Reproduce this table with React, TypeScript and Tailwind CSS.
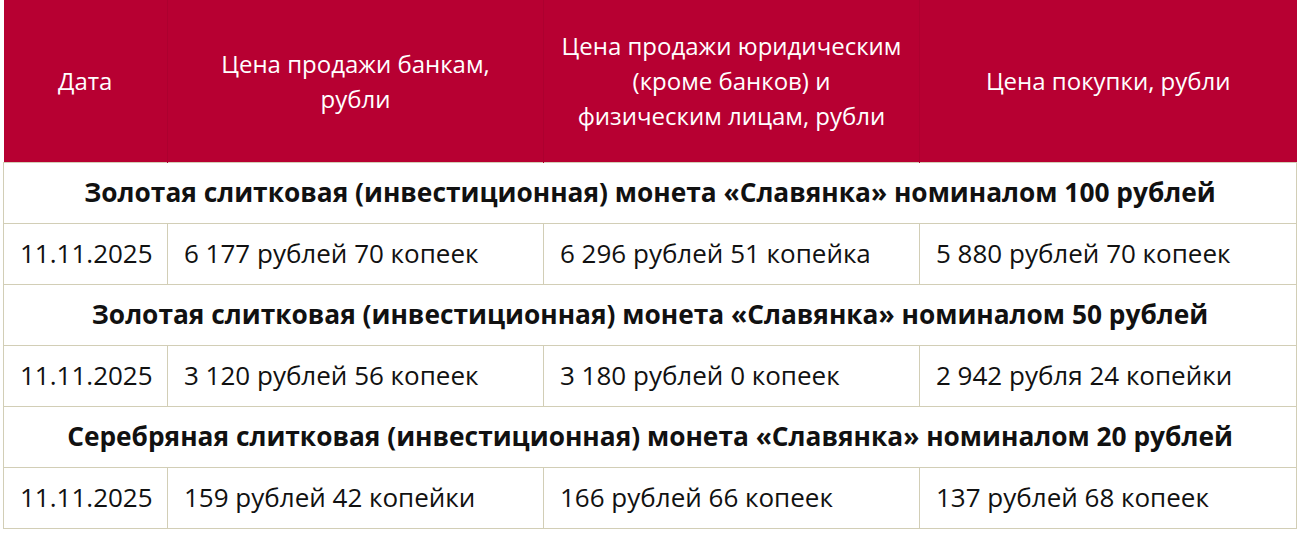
import React from "react";

const sections = [
  {
    title: "Золотая слитковая (инвестиционная) монета «Славянка» номиналом 100 рублей",
    row: ["11.11.2025", "6 177 рублей 70 копеек", "6 296 рублей 51 копейка", "5 880 рублей 70 копеек"],
  },
  {
    title: "Золотая слитковая (инвестиционная) монета «Славянка» номиналом 50 рублей",
    row: ["11.11.2025", "3 120 рублей 56 копеек", "3 180 рублей 0 копеек", "2 942 рубля 24 копейки"],
  },
  {
    title: "Серебряная слитковая (инвестиционная) монета «Славянка» номиналом 20 рублей",
    row: ["11.11.2025", "159 рублей 42 копейки", "166 рублей 66 копеек", "137 рублей 68 копеек"],
  },
];

const App = () => {
  return (
    <main className="w-[1300px] h-[534px] bg-white pl-[3px] font-['Open_Sans',sans-serif]">
      <table className="w-[1293px] border-collapse table-fixed text-[26px] text-[#111]">
        <colgroup>
          <col className="w-[164px]" />
          <col className="w-[376px]" />
          <col className="w-[376px]" />
          <col className="w-[377px]" />
        </colgroup>
        <thead>
          <tr className="h-[162px] bg-[#b70032] text-white text-[24px] leading-[35px]">
            <th className="font-normal px-2 border-r border-[#ad002f]">Дата</th>
            <th className="font-normal px-8 border-r border-[#ad002f]">
              Цена продажи банкам,
              <br />
              рубли
            </th>
            <th className="font-normal px-2 border-r border-[#ad002f]">
              Цена продажи юридическим
              <br />
              (кроме банков) и
              <br />
              физическим лицам, рубли
            </th>
            <th className="font-normal px-2">Цена покупки, рубли</th>
          </tr>
        </thead>
        <tbody>
          {sections.map((s, i) => (
            <React.Fragment key={i}>
              <tr className="h-[61px]">
                <td colSpan={4} className="border border-[#d2ceb6] text-center font-bold text-[26.3px] whitespace-nowrap">
                  {s.title}
                </td>
              </tr>
              <tr className="h-[61px]">
                {s.row.map((c, j) => (
                  <td key={j} className="border border-[#d2ceb6] px-4 whitespace-nowrap">
                    {c}
                  </td>
                ))}
              </tr>
            </React.Fragment>
          ))}
        </tbody>
      </table>
    </main>
  );
};

export default App;
